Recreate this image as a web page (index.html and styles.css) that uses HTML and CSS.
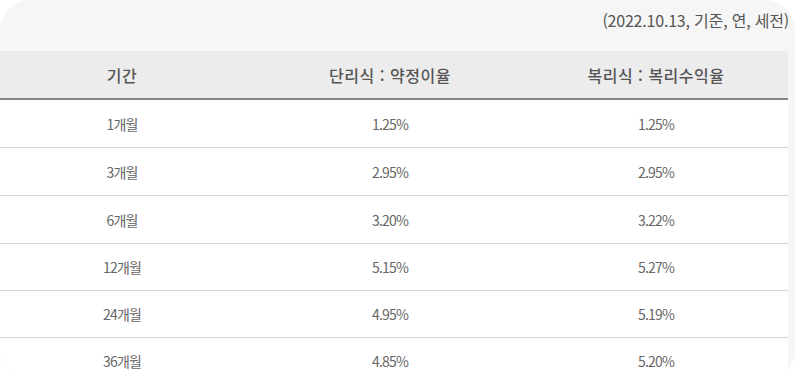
FILE: index.html
```html
<!DOCTYPE html>
<html lang="ko">
<head>
<meta charset="utf-8">
<link rel="stylesheet" href="styles.css">
</head>
<body>
<div class="panel">
  <div class="caption">(2022.10.13, 기준, 연, 세전)</div>
  <table class="rates">
    <colgroup>
      <col class="c1"><col class="c2"><col class="c3">
    </colgroup>
    <thead>
      <tr><th>기간</th><th>단리식 : 약정이율</th><th>복리식 : 복리수익율</th></tr>
    </thead>
    <tbody>
      <tr><td>1개월</td><td>1.25%</td><td>1.25%</td></tr>
      <tr><td>3개월</td><td>2.95%</td><td>2.95%</td></tr>
      <tr><td>6개월</td><td>3.20%</td><td>3.22%</td></tr>
      <tr><td>12개월</td><td>5.15%</td><td>5.27%</td></tr>
      <tr><td>24개월</td><td>4.95%</td><td>5.19%</td></tr>
      <tr><td>36개월</td><td>4.85%</td><td>5.20%</td></tr>
    </tbody>
  </table>
</div>
</body>
</html>
```
FILE: styles.css
```css
html, body {
  margin: 0;
  background: #ffffff;
}
body {
  font-family: "Noto Sans CJK KR", "Noto Sans", sans-serif;
  width: 795px;
  height: 379px;
  overflow: hidden;
}
.panel {
  width: 795px;
  height: 381px;
  background: #f6f6f6;
  border-radius: 30px;
  overflow: hidden;
  box-sizing: border-box;
}
.caption {
  width: 789px;
  height: 51px;
  box-sizing: border-box;
  padding-top: 8px;
  text-align: right;
  font-size: 16px;
  line-height: 24px;
  color: #555;
  letter-spacing: -0.2px;
}
.rates {
  width: 788px;
  border-collapse: collapse;
  table-layout: fixed;
}
.c1 { width: 244px; }
.c2 { width: 292px; }
.c3 { width: 252px; }
.rates th {
  height: 47px;
  padding: 0;
  background: #ececec;
  border-bottom: 2px solid #858585;
  font-size: 16px;
  font-weight: 500;
  color: #555;
  letter-spacing: 0.5px;
}
.rates th:last-child, .rates td:last-child { padding-right: 12px; }
.rates td {
  height: 47px;
  padding: 0;
  background: #fff;
  border-bottom: 1px solid #d6d6d6;
  text-align: center;
  font-size: 14px;
  color: #666;
  letter-spacing: -0.8px;
}
.rates tbody tr:nth-child(4) td,
.rates tbody tr:nth-child(5) td { height: 46px; }
.rates tbody tr:last-child td {
  border-bottom: none;
  height: 60px;
  vertical-align: top;
  padding-top: 13px;
}
```
